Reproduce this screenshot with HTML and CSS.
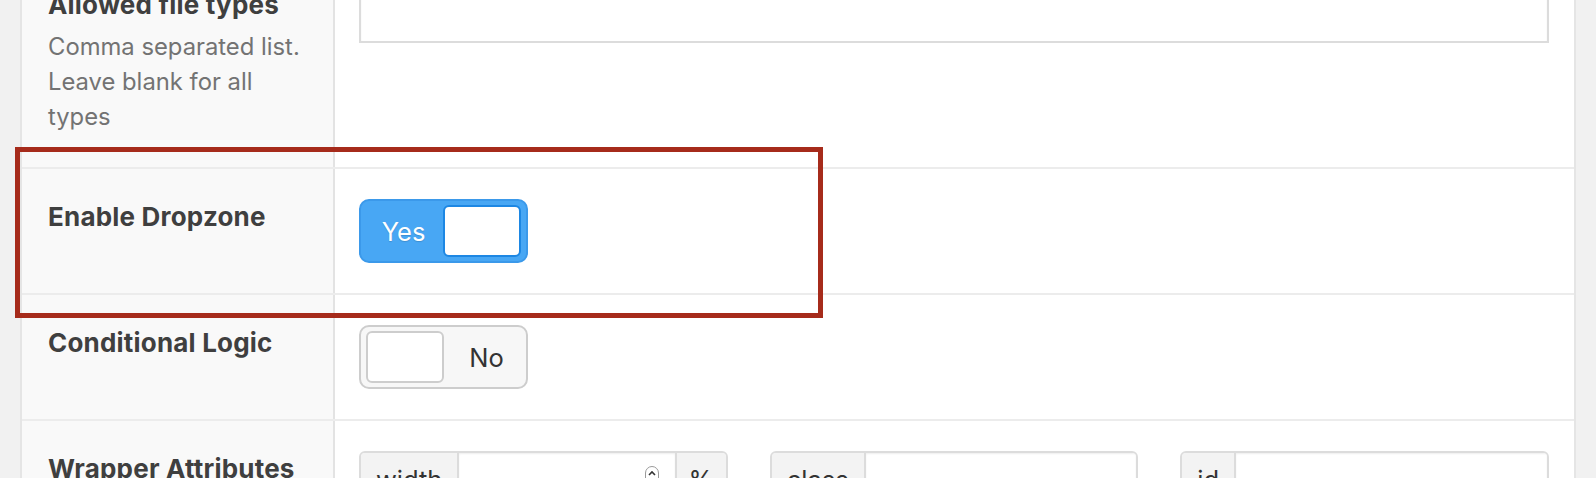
FILE: index.html
```html
<!DOCTYPE html>
<html lang="en">
<head>
<meta charset="utf-8">
<title>Field settings</title>
<link rel="stylesheet" href="styles.css">
</head>
<body>
<div class="panel">
  <div class="row row-first">
    <div class="label-cell">
      <div class="label">Allowed file types</div>
      <p class="desc">Comma separated list. Leave blank for all types</p>
    </div>
    <div class="input-cell">
      <div class="text-input"></div>
    </div>
  </div>
  <div class="row">
    <div class="label-cell">
      <div class="label">Enable Dropzone</div>
    </div>
    <div class="input-cell">
      <div class="switch switch-on">
        <span class="switch-text">Yes</span>
        <span class="knob"></span>
      </div>
    </div>
  </div>
  <div class="row">
    <div class="label-cell">
      <div class="label">Conditional Logic</div>
    </div>
    <div class="input-cell">
      <div class="switch switch-off">
        <span class="knob"></span>
        <span class="switch-text">No</span>
      </div>
    </div>
  </div>
  <div class="row">
    <div class="label-cell">
      <div class="label">Wrapper Attributes</div>
    </div>
    <div class="input-cell">
      <div class="attr-grid">
        <div class="group">
          <span class="addon addon-pre">width</span>
          <span class="group-input">
            <svg class="spin" width="16" height="26" viewBox="0 0 16 26"><rect x="1.5" y="1.5" width="13" height="23" rx="6.5" fill="#fff" stroke="#9a9a9a" stroke-width="1"/><path d="M5 10 L8 7 L11 10" fill="none" stroke="#333" stroke-width="1.6"/></svg>
          </span>
          <span class="addon addon-post">%</span>
        </div>
        <div class="group">
          <span class="addon addon-pre">class</span>
          <span class="group-input"></span>
        </div>
        <div class="group">
          <span class="addon addon-pre">id</span>
          <span class="group-input"></span>
        </div>
      </div>
    </div>
  </div>
</div>
<div class="highlight"></div>
</body>
</html>
```
FILE: styles.css
```css
html, body {
  margin: 0;
  padding: 0;
}
body {
  position: relative;
  background: #f1f1f1;
  font-family: Inter, "Liberation Sans", Arial, sans-serif;
  color: #444;
  height: 478px;
  overflow: hidden;
}
.panel {
  margin: -43px 20px 0 20px;
  background: #fff;
  border-left: 2px solid #e5e5e5;
  border-right: 2px solid #e5e5e5;
}
.row {
  display: grid;
  grid-template-columns: 313px 1fr;
  border-top: 2px solid #ececec;
}
.row-first {
  border-top: none;
}
.label-cell {
  background: #f9f9f9;
  border-right: 2px solid #e3e3e3;
  padding: 30px 24px 32px 26px;
}
.row-first .label-cell {
  padding-bottom: 33px;
}
.label {
  font-size: 26px;
  font-weight: 700;
  letter-spacing: 0.2px;
  line-height: 36px;
  color: #3f3f3f;
}
.desc {
  margin: 6px 0 0;
  font-size: 23.8px;
  line-height: 35px;
  color: #737373;
}
.input-cell {
  padding: 30px 25px 30px 24px;
}
.text-input {
  height: 56px;
  box-sizing: border-box;
  border: 2px solid #dcdcdc;
  background: #fff;
  box-shadow: inset 0 1px 2px rgba(0, 0, 0, 0.07);
}
.switch {
  display: flex;
  align-items: center;
  width: 169px;
  height: 64px;
  box-sizing: border-box;
  border: 2px solid;
  border-radius: 10px;
  padding: 4px 5px;
  font-size: 25.5px;
}
.switch-on {
  background: #48a7f4;
  border-color: #3b99ea;
}
.switch-off {
  background: #f7f7f7;
  border-color: #cdcdcd;
}
.switch-text {
  flex: 1;
  text-align: center;
}
.switch-on .switch-text {
  color: #fff;
  padding-right: 2px;
  text-shadow: 0 1px 1px rgba(0, 0, 0, 0.15);
}
.switch-off .switch-text {
  color: #333;
  padding-left: 8px;
}
.knob {
  width: 78px;
  height: 52px;
  box-sizing: border-box;
  border-radius: 6px;
  background: #fff;
  border: 2px solid;
}
.switch-on .knob {
  border-color: #1d87e3;
}
.switch-off .knob {
  border-color: #cdcdcd;
}
.attr-grid {
  display: grid;
  grid-template-columns: repeat(3, 1fr);
  gap: 42px;
}
.group {
  display: flex;
  height: 56px;
  box-sizing: border-box;
  border: 2px solid #dcdcdc;
  border-radius: 6px;
  overflow: hidden;
  font-size: 25.5px;
  color: #333;
}
.addon {
  display: flex;
  align-items: center;
  padding: 0 15px;
  background: #f3f3f3;
}
.addon-pre {
  border-right: 2px solid #dcdcdc;
}
.addon-post {
  border-left: 2px solid #dcdcdc;
  padding: 0 12px;
}
.group-input {
  flex: 1;
  display: flex;
  justify-content: flex-end;
  align-items: flex-start;
  background: #fff;
  box-shadow: inset 0 1px 2px rgba(0, 0, 0, 0.07);
  padding: 12px 15px 0 0;
}
.highlight {
  position: absolute;
  left: 15px;
  top: 147px;
  width: 808px;
  height: 171px;
  box-sizing: border-box;
  border: 5px solid #a62b1b;
}
```
